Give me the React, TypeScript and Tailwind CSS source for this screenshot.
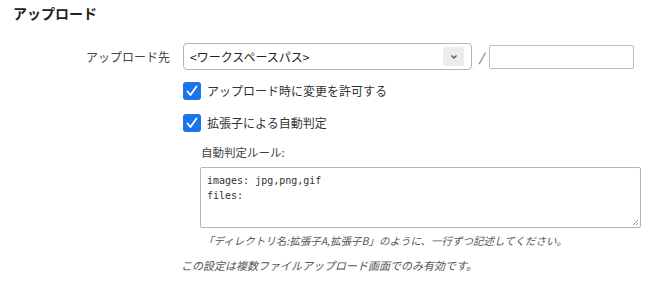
import React from "react";

const jp = { fontFamily: '"Noto Sans CJK JP", "Noto Sans", sans-serif' };
const mono = { fontFamily: '"DejaVu Sans Mono", "Liberation Mono", monospace' };

function Check() {
  return (
    <div className="flex h-[18px] w-[18px] items-center justify-center rounded-[3px] bg-[#1a73e8]">
      <svg width="14" height="14" viewBox="0 0 14 14">
        <path d="M2.5 7.5 L5.5 11 L11.5 2.5" fill="none" stroke="white" strokeWidth="1.8" strokeLinecap="round" strokeLinejoin="round" />
      </svg>
    </div>
  );
}

export default function App() {
  return (
    <div className="h-[286px] w-[670px] bg-white text-[#333]" style={jp}>
      <div className="pl-[13px] pt-[3px] text-[14px] font-bold leading-[20px] text-[#222]">アップロード</div>
      <div className="mt-[20px] flex items-center">
        <div className="w-[170px] text-right text-[12px] text-[#444]">アップロード先</div>
        <div className="ml-[13px] flex h-[27px] w-[289px] items-center justify-between rounded-[4px] border border-[#b5b5b5] pl-[6px] pr-[7px]">
          <span className="text-[12px] text-[#222]">&lt;ワークスペースパス&gt;</span>
          <div className="flex h-[19px] w-[21px] items-center justify-center rounded-[3px] bg-[#ececec]">
            <svg width="8" height="6" viewBox="0 0 8 6">
              <path d="M1.5 1.5 L4 4 L6.5 1.5" fill="none" stroke="#555" strokeWidth="1.3" />
            </svg>
          </div>
        </div>
        <span className="ml-[7px] text-[12px] italic text-[#444]">/</span>
        <div className="ml-[5px] h-[24px] w-[145px] rounded-[2px] border border-[#bdbdbd]" />
      </div>
      <div className="ml-[183px] mt-[12px] flex items-center gap-[6px]">
        <Check />
        <span className="text-[12px] text-[#333]">アップロード時に変更を許可する</span>
      </div>
      <div className="ml-[183px] mt-[14px] flex items-center gap-[6px]">
        <Check />
        <span className="text-[12px] text-[#333]">拡張子による自動判定</span>
      </div>
      <div className="ml-[201px] mt-[12px] text-[11.5px] text-[#444]">自動判定ルール:</div>
      <div className="relative ml-[200px] mt-[6px] h-[61px] w-[441px] rounded-[2px] border border-[#b5b5b5] px-[6px] py-[5px] text-[10px] leading-[15px] text-[#333]" style={mono}>
        <div>images: jpg,png,gif</div>
        <div>files:</div>
        <svg className="absolute bottom-[1px] right-[1px]" width="8" height="8" viewBox="0 0 8 8">
          <path d="M7 2 L2 7 M7 5 L5 7" stroke="#999" strokeWidth="1" />
        </svg>
      </div>
      <div className="ml-[203px] mt-[5px] text-[10.5px] italic text-[#555]">「ディレクトリ名:拡張子A,拡張子B」のように、一行ずつ記述してください。</div>
      <div className="ml-[181px] mt-[8px] text-[11px] italic text-[#555]">この設定は複数ファイルアップロード画面でのみ有効です。</div>
    </div>
  );
}
